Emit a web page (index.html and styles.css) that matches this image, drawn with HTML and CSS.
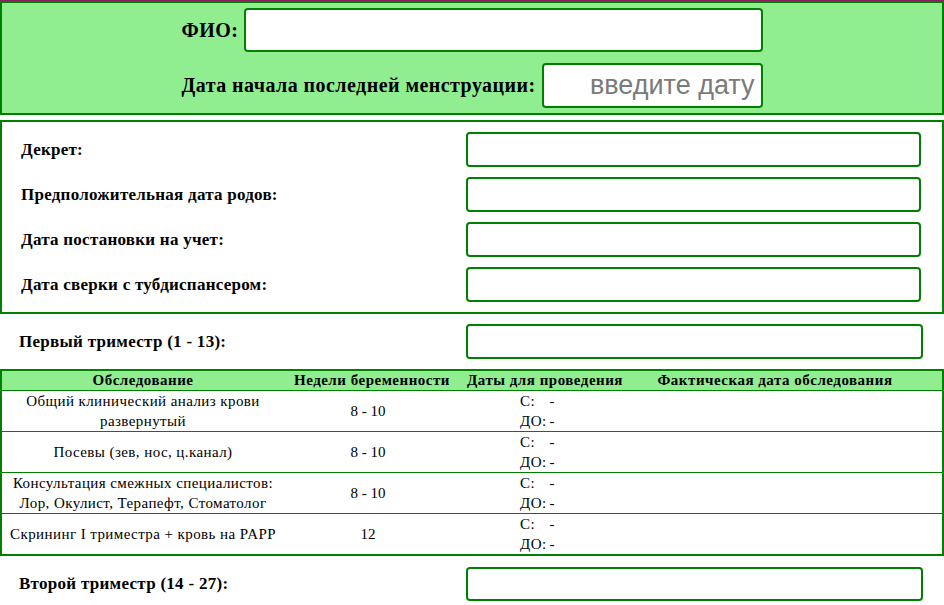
FILE: index.html
```html
<!DOCTYPE html>
<html lang="ru">
<head>
<meta charset="utf-8">
<title>Карта беременности</title>
<link rel="stylesheet" href="styles.css">
</head>
<body>
<div class="topline"></div>
<section class="head">
  <div class="head-row">
    <label class="head-label">ФИО:</label>
    <input class="field fio" type="text">
  </div>
  <div class="head-row">
    <label class="head-label">Дата начала последней менструации:</label>
    <input class="field date" type="text" placeholder="введите дату">
  </div>
</section>

<section class="info">
  <div class="info-row"><span class="lbl">Декрет:</span><input class="field wide" type="text"></div>
  <div class="info-row"><span class="lbl">Предположительная дата родов:</span><input class="field wide" type="text"></div>
  <div class="info-row"><span class="lbl">Дата постановки на учет:</span><input class="field wide" type="text"></div>
  <div class="info-row"><span class="lbl">Дата сверки с тубдиспансером:</span><input class="field wide" type="text"></div>
</section>

<div class="tri-row"><span class="tri-lbl">Первый триместр (1 - 13):</span><input class="field wide" type="text"></div>

<table class="exam">
  <colgroup><col class="c1"><col class="c2"><col class="c3"><col class="c4"></colgroup>
  <thead>
    <tr><th>Обследование</th><th>Недели беременности</th><th>Даты для проведения</th><th class="h4">Фактическая дата обследования</th></tr>
  </thead>
  <tbody>
    <tr><td>Общий клинический анализ крови развернутый</td><td class="wk">8 - 10</td><td class="dates"><div class="range"><span>С:</span><span>-</span><span>ДО:</span><span>-</span></div></td><td></td></tr>
    <tr><td>Посевы (зев, нос, ц.канал)</td><td class="wk">8 - 10</td><td class="dates"><div class="range"><span>С:</span><span>-</span><span>ДО:</span><span>-</span></div></td><td></td></tr>
    <tr><td>Консультация смежных специалистов: Лор, Окулист, Терапефт, Стоматолог</td><td class="wk">8 - 10</td><td class="dates"><div class="range"><span>С:</span><span>-</span><span>ДО:</span><span>-</span></div></td><td></td></tr>
    <tr><td>Скрининг I триместра + кровь на PAPP</td><td class="wk">12</td><td class="dates"><div class="range"><span>С:</span><span>-</span><span>ДО:</span><span>-</span></div></td><td></td></tr>
  </tbody>
</table>

<div class="tri-row tri-second"><span class="tri-lbl">Второй триместр (14 - 27):</span><input class="field wide" type="text"></div>
</body>
</html>
```

FILE: styles.css
```css
html, body {
  margin: 0;
  padding: 0;
  background: #ffffff;
}
body {
  font-family: "Liberation Serif", "Times New Roman", serif;
  color: #000;
  width: 944px;
  overflow: hidden;
}
.topline {
  height: 1px;
  background: #8a1f5c;
}
.field {
  box-sizing: border-box;
  border: 2px solid #008000;
  border-radius: 4px;
  background: #fff;
  margin: 0;
  padding: 0 6px;
  outline: none;
  font-family: "Liberation Sans", Arial, sans-serif;
}
.head {
  background: #90ee90;
  border: 2px solid #008000;
  padding: 5px 0;
  display: flex;
  flex-direction: column;
  align-items: center;
  gap: 11px;
}
.head-row {
  width: 581px;
  display: flex;
  align-items: center;
  gap: 6px;
}
.head-label {
  font-weight: bold;
  font-size: 20px;
  letter-spacing: 0.45px;
  white-space: nowrap;
}
.fio {
  flex: 1;
  min-width: 0;
  height: 44px;
}
.date {
  flex: 1;
  min-width: 0;
  height: 45px;
  font-size: 27px;
  text-align: right;
  padding-right: 6px;
}
.date::placeholder {
  color: #7a7a7a;
}
.info {
  margin-top: 5px;
  border: 2px solid #008000;
  padding: 10px 21px 10px 19px;
  display: flex;
  flex-direction: column;
  gap: 10px;
}
.info-row {
  display: grid;
  grid-template-columns: 445px 1fr;
  align-items: center;
}
.lbl {
  font-weight: bold;
  font-size: 17px;
  letter-spacing: 0.25px;
}
.wide {
  height: 35px;
  width: 100%;
}
.tri-row {
  display: grid;
  grid-template-columns: 447px 1fr;
  align-items: center;
  padding: 10px 21px 10px 19px;
}
.tri-lbl {
  font-weight: bold;
  font-size: 17px;
  letter-spacing: 0.28px;
}
.tri-second {
  padding-top: 11px;
}
.tri-second .wide {
  height: 34px;
}
.exam {
  width: 944px;
  table-layout: fixed;
  border-collapse: separate;
  border-spacing: 0;
  border: 2px solid #008000;
  font-size: 15px;
  letter-spacing: 0.42px;
}
.c1 { width: 282px; }
.c2 { width: 176px; }
.c3 { width: 170px; }
.c4 { width: 312px; }
.exam th {
  background: #90ee90;
  font-weight: bold;
  height: 19px;
  padding: 0;
  line-height: 17px;
  text-align: center;
  vertical-align: middle;
  letter-spacing: 0.5px;
}
.exam th.h4 {
  padding-right: 22px;
}
.exam td {
  border-top: 1px solid #008000;
  height: 40px;
  padding: 0 4px;
  line-height: 20px;
  text-align: center;
  vertical-align: middle;
}
.exam td.wk {
  padding-right: 12px;
  letter-spacing: 0;
}
.exam td.dates {
  text-align: left;
  padding: 0 0 0 60px;
}
.range {
  display: grid;
  grid-template-columns: auto auto;
  justify-content: start;
  column-gap: 3px;
}
```
